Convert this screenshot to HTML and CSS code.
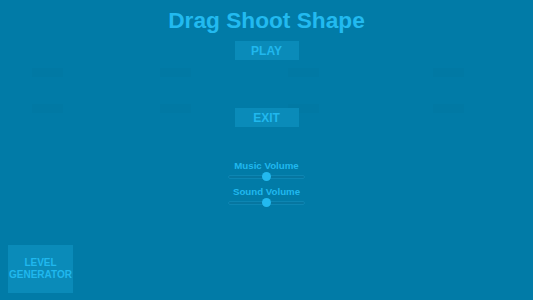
FILE: index.html
```html
<!DOCTYPE html>
<html lang="en">
<head>
    <meta charset="UTF-8">
    <meta name="viewport" content="width=device-width, initial-scale=1.0">
    <title>Drag Shoot Shape</title>
    <link rel="stylesheet" href="styles.css">
</head>
<body>
    <div class="screen">
        <!-- hidden level slots sitting behind the menu -->
        <div class="level-grid">
            <div class="level-row">
                <div class="slot"></div>
                <div class="slot"></div>
                <div class="slot"></div>
                <div class="slot last"></div>
            </div>
            <div class="level-row">
                <div class="slot"></div>
                <div class="slot"></div>
                <div class="slot"></div>
                <div class="slot last"></div>
            </div>
        </div>

        <h1 class="title">Drag Shoot Shape</h1>

        <button class="menu-btn play">PLAY</button>
        <button class="menu-btn exit">EXIT</button>

        <div class="volume">
            <div class="volume-label">Music Volume</div>
            <div class="slider">
                <div class="track"></div>
                <div class="handle" style="left: 50%;"></div>
            </div>
            <div class="volume-label sound">Sound Volume</div>
            <div class="slider">
                <div class="track"></div>
                <div class="handle" style="left: 50%;"></div>
            </div>
        </div>

        <button class="level-btn">LEVEL<br>GENERATOR</button>
    </div>
</body>
</html>
```

FILE: styles.css
```css
* {
    margin: 0;
    padding: 0;
    box-sizing: border-box;
    font-family: "Liberation Sans", Arial, sans-serif;
}

body {
    background-color: #017ba7;
    width: 533px;
    height: 300px;
    overflow: hidden;
}

.screen {
    position: relative;
    height: 300px;
    display: flex;
    flex-direction: column;
    align-items: center;
    color: #20b8ee;
}

.level-grid {
    position: absolute;
    top: 68px;
    left: 32px;
    display: flex;
    flex-direction: column;
    gap: 27px;
}

.level-row {
    display: flex;
    gap: 97px;
}

.slot {
    width: 31px;
    height: 9px;
    background: #0179a4;
}

.slot.last {
    margin-left: 17px;
}

.title {
    position: relative;
    margin-top: 6px;
    font-size: 22.7px;
    line-height: 28px;
    font-weight: bold;
    color: #22baf0;
}

.menu-btn {
    position: relative;
    width: 64px;
    height: 19px;
    border: none;
    background: #0a8bb9;
    color: #20b8ee;
    font-size: 12px;
    font-weight: bold;
    cursor: pointer;
}

.play {
    margin-top: 7px;
}

.exit {
    margin-top: 48px;
}

.volume {
    margin-top: 33px;
    width: 77px;
    display: flex;
    flex-direction: column;
    align-items: center;
}

.volume-label {
    font-size: 9.7px;
    line-height: 12px;
    font-weight: bold;
    white-space: nowrap;
}

.volume-label.sound {
    margin-top: 5px;
}

.slider {
    position: relative;
    width: 77px;
    height: 9px;
}

.track {
    position: absolute;
    left: 0;
    right: 0;
    top: 2.5px;
    height: 4px;
    border-radius: 2px;
    background: #0676a0;
    border: 1px solid #0d86b3;
}

.handle {
    position: absolute;
    top: 0;
    width: 9px;
    height: 9px;
    margin-left: -4.5px;
    border-radius: 50%;
    background: #22b9ef;
}

.level-btn {
    margin-top: auto;
    margin-bottom: 7px;
    margin-left: 8px;
    align-self: flex-start;
    width: 65px;
    height: 48px;
    border: none;
    background: #0a8bb9;
    color: #20b8ee;
    font-size: 10px;
    line-height: 12px;
    font-weight: bold;
    cursor: pointer;
}
```
